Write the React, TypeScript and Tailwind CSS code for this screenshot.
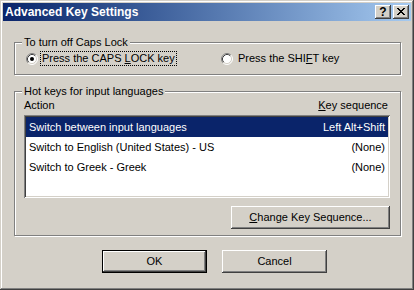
import React from 'react';

const raised =
  'shadow-[inset_-1px_-1px_0_#404040,inset_1px_1px_0_#ffffff,inset_-2px_-2px_0_#808080,inset_2px_2px_0_#d4d0c8]';

const Radio: React.FC<{ checked?: boolean }> = ({ checked }) => (
  <svg width="12" height="12" viewBox="0 0 12 12" className="shrink-0">
    <circle cx="6" cy="6" r="5" fill="#ffffff" />
    <path d="M2.11 9.89 A5.5 5.5 0 0 1 9.89 2.11" fill="none" stroke="#808080" strokeWidth="1" />
    <path d="M9.89 2.11 A5.5 5.5 0 0 1 2.11 9.89" fill="none" stroke="#ffffff" strokeWidth="1" />
    <path d="M2.82 9.18 A4.5 4.5 0 0 1 9.18 2.82" fill="none" stroke="#404040" strokeWidth="1" />
    <path d="M9.18 2.82 A4.5 4.5 0 0 1 2.82 9.18" fill="none" stroke="#d4d0c8" strokeWidth="1" />
    {checked && <circle cx="6" cy="6" r="2" fill="#000000" />}
  </svg>
);

const CloseGlyph: React.FC = () => {
  const rows = ['11000011', '01100110', '00111100', '00011000', '00111100', '01100110', '11000011'];
  return (
    <svg width="8" height="7" viewBox="0 0 8 7" shapeRendering="crispEdges">
      {rows.map((r, y) =>
        r.split('').map((c, x) => (c === '1' ? <rect key={`${x}-${y}`} x={x} y={y} width="1" height="1" fill="#000" /> : null))
      )}
    </svg>
  );
};

const GroupBox: React.FC<{ label: string; className?: string; children: React.ReactNode }> = ({ label, className, children }) => (
  <div className={`relative border border-[#808080] shadow-[inset_1px_1px_0_#ffffff,1px_1px_0_#ffffff] ${className ?? ''}`}>
    <span className="absolute -top-[7px] left-[7px] px-[2px] bg-[#d4d0c8] leading-[13px]">{label}</span>
    {children}
  </div>
);

const rows = [
  { action: 'Switch between input languages', keys: 'Left Alt+Shift', selected: true },
  { action: 'Switch to English (United States) - US', keys: '(None)' },
  { action: 'Switch to Greek - Greek', keys: '(None)' },
];

export default function App() {
  return (
    <div
      className="w-[414px] h-[290px] bg-[#d4d0c8] p-[3px] flex flex-col text-[11px] text-black shadow-[inset_-1px_-1px_0_#404040,inset_1px_1px_0_#d4d0c8,inset_-2px_-2px_0_#808080,inset_2px_2px_0_#ffffff]"
      style={{ fontFamily: '"Liberation Sans", Arial, sans-serif' }}
    >
      {/* title bar */}
      <div className="h-[18px] flex items-center justify-between pl-[2px] pr-[2px] bg-linear-to-r from-[#0a246a] to-[#a6caf0]">
        <span className="text-white font-bold text-[12px] leading-[14px]">Advanced Key Settings</span>
        <div className="flex gap-[2px]">
          <div className={`w-[16px] h-[14px] bg-[#d4d0c8] flex items-center justify-center ${raised}`}>
            <span className="font-bold text-[12px] leading-[12px] -mt-[1px]">?</span>
          </div>
          <div className={`w-[16px] h-[14px] bg-[#d4d0c8] flex items-center justify-center pb-[1px] ${raised}`}>
            <CloseGlyph />
          </div>
        </div>
      </div>

      <div className="flex flex-col pl-[11px] pr-[10px]">
        <GroupBox label="To turn off Caps Lock" className="mt-[21px] h-[33px]">
          <div className="flex items-center pl-[11px] pt-[8px] h-[23px]">
            <div className="flex items-center w-[195px]">
              <Radio checked />
              <span className="ml-[2px] border border-dotted border-black px-[1px] leading-[13px]">
                Press the CAPS <u className="underline-offset-[1px]">L</u>OCK key
              </span>
            </div>
            <div className="flex items-center">
              <Radio />
              <span className="ml-[5px] leading-[13px]">
                Press the SHI<u className="underline-offset-[1px]">F</u>T key
              </span>
            </div>
          </div>
        </GroupBox>

        <GroupBox label="Hot keys for input languages" className="mt-[16px] h-[145px]">
          <div className="flex flex-col pl-[9px] pr-[10px] pt-[7px]">
            <div className="flex justify-between leading-[13px] pr-[2px]">
              <span>Action</span>
              <span>
                <u className="underline-offset-[1px]">K</u>ey sequence
              </span>
            </div>
            <div className="mt-[3px] h-[83px] bg-white p-[2px] shadow-[inset_1px_1px_0_#808080,inset_-1px_-1px_0_#ffffff,inset_2px_2px_0_#404040,inset_-2px_-2px_0_#d4d0c8]">
              {rows.map((r) => (
                <div
                  key={r.action}
                  className={`h-[20px] flex items-center justify-between pl-[3px] pr-[3px] ${r.selected ? 'bg-[#0a246a] text-white' : ''}`}
                >
                  <span>{r.action}</span>
                  <span>{r.keys}</span>
                </div>
              ))}
            </div>
            <div className="mt-[8px] flex justify-end">
              <div className={`w-[159px] h-[23px] flex items-center justify-center ${raised}`}>
                <span>
                  <u className="underline-offset-[1px]">C</u>hange Key Sequence...
                </span>
              </div>
            </div>
          </div>
        </GroupBox>
      </div>

      <div className="mt-[14px] flex pl-[99px] gap-[15px]">
        <div className="w-[105px] h-[23px] border border-black">
          <div className={`w-full h-full flex items-center justify-center ${raised}`}>OK</div>
        </div>
        <div className={`w-[105px] h-[23px] flex items-center justify-center ${raised}`}>Cancel</div>
      </div>
    </div>
  );
}
